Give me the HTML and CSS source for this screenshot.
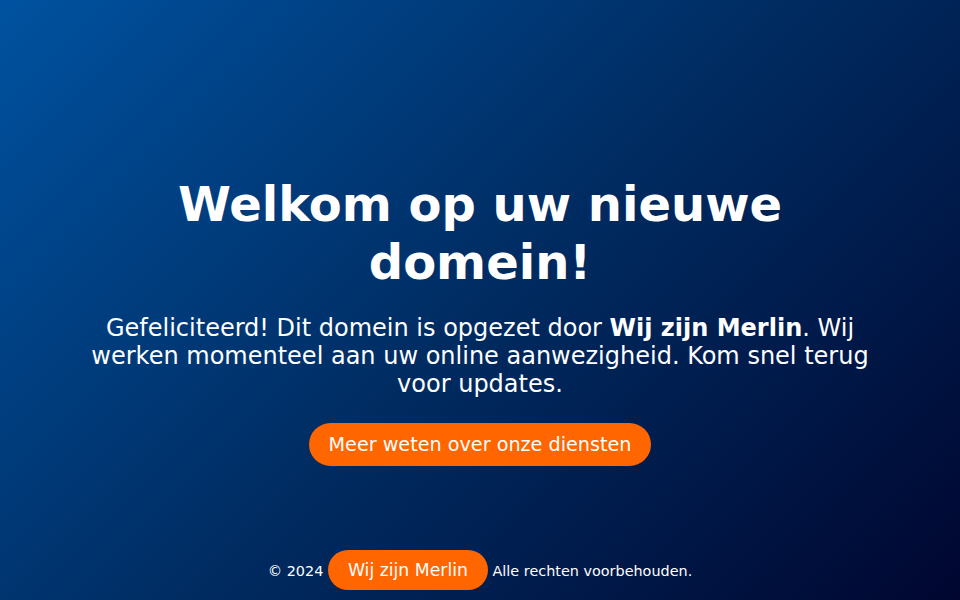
FILE: index.html
```html
<!DOCTYPE html>
<html lang="nl">
<head>
<meta charset="utf-8">
<title>Welkom op uw nieuwe domein!</title>
<link rel="stylesheet" href="styles.css">
</head>
<body>
<main class="main">
  <div class="content">
    <h1 class="title">Welkom op uw nieuwe domein!</h1>
    <p class="lead">Gefeliciteerd! Dit domein is opgezet door <strong>Wij zijn Merlin</strong>. Wij werken momenteel aan uw online aanwezigheid. Kom snel terug voor updates.</p>
    <a class="btn" href="#">Meer weten over onze diensten</a>
  </div>
</main>
<footer class="footer">
  <p class="footer-text">© 2024 <a class="btn" href="#">Wij zijn Merlin</a> Alle rechten voorbehouden.</p>
</footer>
</body>
</html>
```
FILE: styles.css
```css
html, body {
  margin: 0;
  padding: 0;
  height: 100%;
}
body {
  font-family: "DejaVu Sans", sans-serif;
  color: #ffffff;
  background: linear-gradient(135deg, #0052a0 0%, #002c62 50%, #000630 100%);
  display: flex;
  flex-direction: column;
  min-height: 100vh;
  box-sizing: border-box;
}
.main {
  flex: 1;
  display: flex;
  align-items: center;
  justify-content: center;
  padding-top: 92px;
}
.content {
  max-width: 800px;
  text-align: center;
}
.title {
  font-size: 48px;
  font-weight: bold;
  line-height: 1.2;
  margin: 0 0 22px;
}
.lead {
  font-size: 24px;
  margin: 0 0 25px;
}
.btn {
  display: inline-block;
  background: #ff6600;
  color: #ffffff;
  text-decoration: none;
  font-size: 1.2em;
  padding: 10px 20px;
  border-radius: 25px;
}
.content .btn {
  font-size: 19.2px;
}
.footer {
  text-align: center;
  padding: 0 0 10px;
}
.footer-text {
  font-size: 14.4px;
  margin: 0;
}
```
